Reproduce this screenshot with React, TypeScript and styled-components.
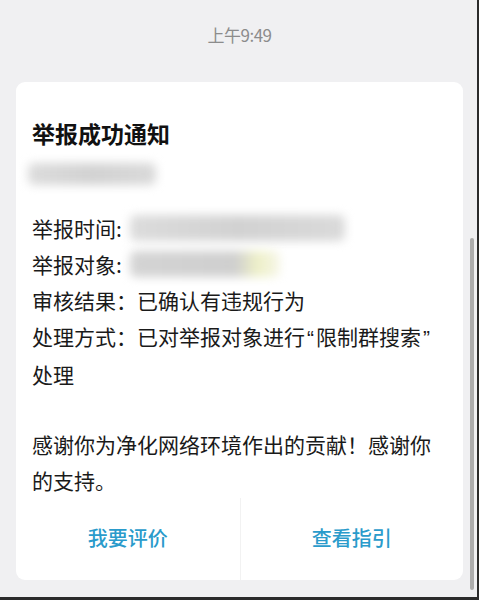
import styled, { createGlobalStyle } from "styled-components";

const GlobalStyle = createGlobalStyle`
  html, body {
    margin: 0;
    padding: 0;
    background: #f0f0f2;
    overflow: hidden;
  }
  * {
    box-sizing: border-box;
  }
`;

const Frame = styled.div`
  position: relative;
  width: 479px;
  height: 600px;
  background: #f0f0f2;
  border-right: 2px solid #2b2b2b;
  border-bottom: 3px solid #2b2b2b;
  font-family: "Noto Sans CJK SC", "Noto Sans", sans-serif;
  padding: 0 14px 0 16px;
  display: flex;
  flex-direction: column;
`;

const Time = styled.div`
  height: 82px;
  padding-top: 22px;
  text-align: center;
  font-size: 17px;
  line-height: 26px;
  color: #8c8c8c;
  letter-spacing: -0.5px;
`;

const Card = styled.div`
  background: #fff;
  border-radius: 9px;
  width: 447px;
  display: flex;
  flex-direction: column;
`;

const Body = styled.div`
  padding: 35px 16px 0 16px;
`;

const Title = styled.h1`
  margin: 0;
  font-size: 23px;
  font-weight: 700;
  line-height: 32px;
  color: #111;
`;

const Blur = styled.div<{ $w: number; $h: number; $tint?: boolean }>`
  width: ${(p) => p.$w}px;
  height: ${(p) => p.$h}px;
  border-radius: 6px;
  background: ${(p) =>
    p.$tint
      ? "linear-gradient(90deg, #d4d4d4 0%, #cfcfcf 70%, #eef0c8 85%, #f6f6e8 100%)"
      : "linear-gradient(90deg, #dcdcdc, #d2d2d2 50%, #dadada)"};
  filter: blur(5px);
`;

const Sub = styled.div`
  margin: 14px 0 0 -4px;
`;

const Lines = styled.div`
  margin-top: 25px;
  font-size: 21px;
  line-height: 36px;
  color: #1a1a1a;
`;

const Row = styled.div`
  display: flex;
  align-items: center;
`;

const Quote = styled.span`
  font-family: "Liberation Sans", sans-serif;
  padding: 0 2px;
`;

const Gap = styled.div`
  height: 34px;
`;

const Actions = styled.div`
  display: grid;
  grid-template-columns: 1fr 1fr;
  height: 82px;
`;

const Action = styled.button<{ $divider?: boolean }>`
  border: none;
  background: none;
  font-family: inherit;
  font-size: 20px;
  font-weight: 500;
  color: #2a9bcb;
  padding: 0 0 4px 0;
  border-left: ${(p) => (p.$divider ? "1px solid #f2f2f2" : "none")};
`;

const Scrollbar = styled.div`
  position: absolute;
  right: 3px;
  top: 238px;
  width: 4px;
  height: 352px;
  background: #acacac;
  border-radius: 2px;
`;

export default function App() {
  return (
    <>
      <GlobalStyle />
      <Frame>
        <Time>上午9:49</Time>
        <Card>
          <Body>
            <Title>举报成功通知</Title>
            <Sub>
              <Blur $w={128} $h={22} />
            </Sub>
            <Lines>
              <Row>
                举报时间:
                <Blur $w={215} $h={26} style={{ marginLeft: 8 }} />
              </Row>
              <Row>
                举报对象:
                <Blur $w={150} $h={26} $tint style={{ marginLeft: 8 }} />
              </Row>
              <div>审核结果：已确认有违规行为</div>
              <div>
                处理方式：已对举报对象进行<Quote>“</Quote>限制群搜索<Quote>”</Quote>
                <br />
                处理
              </div>
              <Gap />
              <div>感谢你为净化网络环境作出的贡献！感谢你的支持。</div>
            </Lines>
          </Body>
          <Actions>
            <Action>我要评价</Action>
            <Action $divider>查看指引</Action>
          </Actions>
        </Card>
        <Scrollbar />
      </Frame>
    </>
  );
}
